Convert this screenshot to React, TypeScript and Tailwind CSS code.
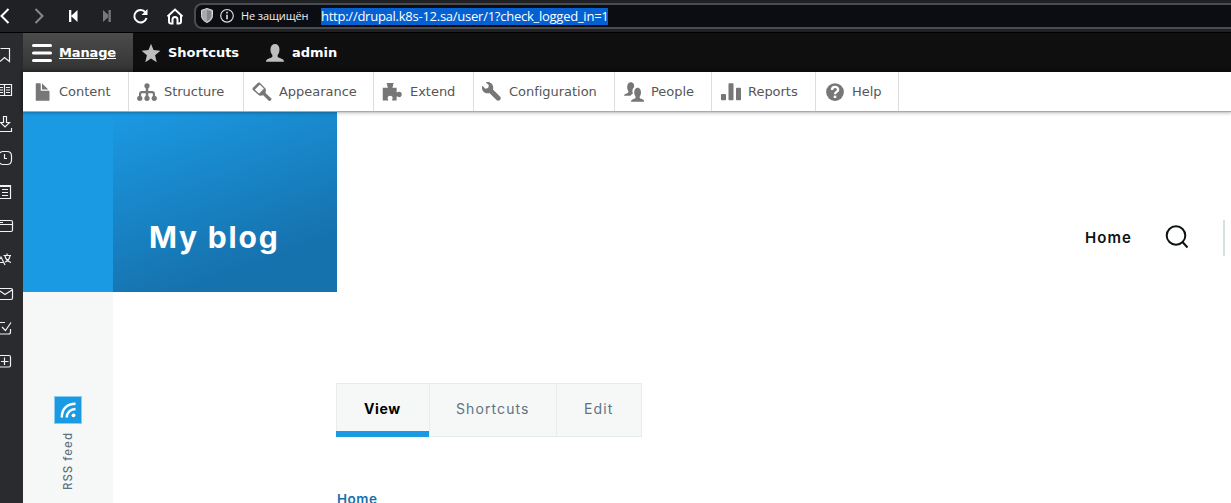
import React from "react";

const FileIcon = (
  <path d="M12.502 7h-5c-.276 0-.502-.225-.502-.5v-5c0-.275-.225-.5-.5-.5h-3c-.276 0-.5.225-.5.5v13.029c0 .275.225.5.5.5h10c.275 0 .5-.225.5-.5v-7.029c.002-.275-.223-.5-.498-.5zM8.502 6h4c.275 0 .34-.159.146-.354l-4.293-4.292c-.195-.195-.353-.129-.353.146v4c-.001.275.224.5.5.5z" />
);
const TreeIcon = (
  <>
    <circle cx="8" cy="3" r="2.100" />
    <path d="M7 4h2v3.100H12.200c1.300 0 2.200.9 2.200 2.200V12h-1.700V9.800c0-.6-.3-.9-.9-.9H9V12H7V8.900H4.200c-.6 0-.9.3-.9.900V12H1.600V9.300c0-1.300.9-2.200 2.200-2.200H7z" />
    <circle cx="2.200" cy="13" r="2.100" />
    <circle cx="8" cy="13" r="2.100" />
    <circle cx="13.800" cy="13" r="2.100" />
  </>
);
const BrushIcon = (
  <>
    <path d="M1 5.900 5.900 1l4.500 4.500-.5 3.900-4 .8z" fill="none" stroke="#777" strokeWidth="1.100" />
    <path d="M.3 5 5 .3l1.600 1.500-4.800 4.800zM5.400 9.600 9.800 5l1.200 1.200-.2 2.500 4.500 4.300c1 1-.8 2.900-1.900 1.900L9 10.500l-2.400.4z" />
  </>
);
const PuzzleIcon = (
  <path d="M.6 4.600h4c.5-.8-.5-1-.5-1.900C4.100 1.700 4.400 1.500 3.700 1.400V.8h5.600v.6c-.700.1-.4.300-.4 1.300 0 .9-.9 1.100-.4 1.900h3.200v3.500c.9.500 1-.3 2.100-.3 2.700 0 2.700 4.300 0 4.300-1.100 0-1.200-.8-2.100-.3V14.800H8.200c-.4-.8.300-1.200.3-2.100 0-2.300-4-2.300-4 0 0 .9.700 1.300.3 2.100H.6z" />
);
const WrenchIcon = (
  <path fillRule="evenodd" d="M14.416 11.586l-.01-.009-5.656-5.656c.15-.449.252-.921.252-1.421 0-2.485-2.016-4.500-4.502-4.500-.505 0-.981.102-1.434.255l2.431 2.431-.588 2.196-2.196.588-2.445-2.445c-.162.464-.268.956-.268 1.475 0 2.486 2.014 4.500 4.500 4.500.5 0 .972-.102 1.421-.251l5.667 5.665c.781.781 2.047.781 2.828 0s.781-2.047 0-2.828z" />
);
const PeopleIcon = (
  <>
    <path d="M0 10.900c.2-1.500 1.300-1.500 2.600-2 1.400-.5 1-1.500.4-2.500-.7-1-.9-6.200 2.400-6.200 2.400 0 2.900 2 2.700 4-1.600 1.100-1.600 3-1 5L5 11z" />
    <path d="M5.500 15.800c0-1.600 1.200-2 2.800-2.500 1.400-.5 1.100-1.500.5-2.500-1-1.400-1-6.200 2.100-6.200s3.100 4.800 2.100 6.200c-.6 1-.9 2 .5 2.500 1.600.5 2.700.9 2.700 2.500z" />
  </>
);
const ChartIcon = (
  <>
    <rect x="0" y="9.600" width="4" height="5" rx=".6" />
    <rect x="6" y="1" width="4" height="13.600" rx=".6" />
    <rect x="12" y="4.500" width="4" height="10.100" rx=".6" />
  </>
);
const HelpIcon = (
  <>
    <circle cx="8" cy="8" r="7.100" />
    <path d="M5.600 6.400c0-3.300 4.900-3.200 4.900-.3 0 1.900-2.500 1.700-2.500 3.700" fill="none" stroke="#fff" strokeWidth="1.900" />
    <rect x="7" y="10.900" width="2" height="1.900" fill="#fff" />
  </>
);
const PersonIcon = (
  <path d="M.8 15c0-2.400 2.400-2.600 4-3.300 1.600-.6 1.400-1.800.5-3C3.800 6.800 3.800.8 8 .8s4.200 6 2.700 7.900c-.9 1.200-1.100 2.400.5 3 1.600.7 4 .9 4 3.300z" />
);

const menu = [
  { label: "Content", icon: FileIcon, w: "w-[106px]", i: "ml-[9px] mr-[7px]" },
  { label: "Structure", icon: TreeIcon, w: "w-[115px]", i: "ml-2 mr-[7px]" },
  { label: "Appearance", icon: BrushIcon, w: "w-[130px]", i: "ml-2 mr-[7px]" },
  { label: "Extend", icon: PuzzleIcon, w: "w-[100px]", i: "ml-2 mr-2" },
  { label: "Configuration", icon: WrenchIcon, w: "w-[141px]", i: "ml-2 mr-[7px]" },
  { label: "People", icon: PeopleIcon, w: "w-[97px]", i: "ml-[9px] mr-[7px]" },
  { label: "Reports", icon: ChartIcon, w: "w-[104px]", i: "ml-[9px] mr-[7px]" },
  { label: "Help", icon: HelpIcon, w: "w-[83px]", i: "ml-[9px] mr-[7px]" },
];

/* Each drawing is centred vertically on y = 17 of a 23x34 cell. */
const panels = [
  <path key="0" d="M0.500 9.500h9v13l-5-4-4.500 4" />,
  <path key="1" d="M0 11.500h4.500v11H0M4.500 11.500h7v11h-7M0 14.500h3M0 17h3M0 19.500h3M6 14.500h4M6 17h4M6 19.500h4" />,
  <path key="2" d="M3.500 9.500h3v6h3L5 20 .500 15.500h3zM0 24.500h11.500V21" />,
  <path key="3" d="M0 12q1-1.500 3-1.500h4q4.500 0 4.500 4.500v4q0 4.500-4.500 4.500H3q-2 0-3-1.500M4.500 13v4.500H7" />,
  <path key="4" d="M0 10.500h10.500v13H0M0 11.500h10M2 14.500h6M2 17.500h6M2 20.500h6" />,
  <path key="5" d="M0 11.500h11q1.500 0 1.500 1.500v8q0 1.500-1.500 1.500H0M0 15.500h12.500M0 13.500h3" />,
  <path key="6" d="M0 16l1-2 4 8M0 19.500h3M3.500 12.500H11M7 10.500v2M5 13c1 4 3 5.500 6 6.500M10 13c-1 4-3 5.500-5 6" />,
  <path key="7" d="M0 11.500h11q1.500 0 1.500 1.500v8q0 1.500-1.500 1.500H0M0 14l5 3.500 7-4.500" />,
  <path key="8" d="M0 11.500h5M10.500 18v3q0 2-2 2H0M2 16l3.500 3.500 5.500-8" />,
  <path key="9" d="M0 10.500h9q1.500 0 1.500 1.500v8.500q0 1.500-1.500 1.500H0M1 16.500h7.500M4.500 12.500V20" />,
];

function BrowserBar() {
  return (
    <div className="flex h-8 shrink-0 items-center bg-[#202124]">
      <svg width="194" height="32" viewBox="0 0 194 32" fill="none" stroke="#fff" strokeWidth="2">
        <path d="M8.500 9 1.500 16l7 7" />
        <path d="m35.500 9 7 7-7 7" stroke="#87888b" />
        <g fill="#fff" stroke="none">
          <path d="M69 10h2.300v12H69zM77.500 10v12L71 16z" />
          <path d="M108.500 10h2.300v12h-2.300zM103 10v12l6.500-6z" fill="#77787b" />
        </g>
        <path d="M145.500 12.500A6.200 6.200 0 1 0 146.500 18" />
        <path d="M147.500 9v6h-6z" fill="#fff" stroke="none" />
        <path d="m167.500 16.500 7.500-7 7.500 7M169 15.500v6q0 2 2 2h1.500v-4q0-2.500 2.500-2.500t2.500 2.500v4h1.500q2 0 2-2v-6" />
      </svg>
      <div className="flex h-[26px] flex-1 items-center rounded-l-lg border-2 border-r-0 border-[#4a4b4f] bg-[#0c0d12]">
        <svg className="ml-1 shrink-0" width="36" height="20" viewBox="0 0 36 20">
          <path d="m7 2.500 5.500 1.800v5.200c0 3.500-2.500 5.800-5.500 7-3-1.200-5.500-3.500-5.500-7V4.300z" fill="#aaa" stroke="#ddd" />
          <path d="M7 4v11c2.500-1 4-3 4-5.500V5.300z" fill="#888" />
          <circle cx="27" cy="9.800" r="6.300" fill="none" stroke="#ddd" strokeWidth="1.200" />
          <path d="M27 8.800V13.300M27 5.800v1.600" stroke="#eee" strokeWidth="1.500" />
        </svg>
        <span className="ml-[5px] w-[80px] whitespace-nowrap font-['Open_Sans','Noto_Sans',sans-serif] text-[11px] leading-4 tracking-[-0.1px] text-[#eee]">Не защищён</span>
        <span className="mt-px h-[17px] w-[287px] whitespace-nowrap bg-[#0560d2] font-['Open_Sans','Noto_Sans',sans-serif] text-[13px] leading-[17px] tracking-[-0.25px] text-white">http://drupal.k8s-12.sa/user/1?check_logged_in=1</span>
      </div>
    </div>
  );
}

function AdminBar() {
  return (
    <div className="flex h-[39px] shrink-0 bg-[#0f0f0f] font-['DejaVu_Sans',sans-serif] text-[13px] font-bold text-white">
      <div className="flex w-[110px] items-center bg-gradient-to-b from-[#4c4c4c] to-[#333]">
        <svg className="ml-[9px]" width="20" height="20" viewBox="0 0 20 20" stroke="#fff" strokeWidth="3" strokeLinecap="round">
          <path d="M1.500 2.500h17M1.500 10h17M1.500 17.500h17" />
        </svg>
        <span className="ml-[7px] tracking-[-0.15px] underline">Manage</span>
      </div>
      <div className="flex w-[124px] items-center">
        <svg className="ml-2" width="20" height="20" viewBox="0 0 20 20" fill="#bebebe">
          <path d="m10 .8 2.500 6.300 6.900.6-5.300 4.500 1.600 7L10 15.500l-5.700 3.700 1.600-7L.6 7.700l6.900-.6z" />
        </svg>
        <span className="ml-[7px]">Shortcuts</span>
      </div>
      <div className="flex items-center">
        <svg className="ml-2" width="20" height="20" viewBox="0 0 16 16" fill="#bebebe">{PersonIcon}</svg>
        <span className="ml-[7px] tracking-[-0.05px]">admin</span>
      </div>
    </div>
  );
}

function AdminTray() {
  return (
    <div className="relative z-10 flex h-[39px] shrink-0 bg-white font-['DejaVu_Sans',sans-serif] text-[13px] text-[#565656] shadow-[0_1px_0_#aaa,0_0_4px_1px_rgba(0,0,0,.45)]">
      {menu.map((m) => (
        <div key={m.label} className={`flex shrink-0 items-center border-r border-[#ddd] ${m.w}`}>
          <svg className={`shrink-0 ${m.i}`} width="20" height="20" viewBox="0 0 16 16" fill="#777">{m.icon}</svg>
          <span className="whitespace-nowrap tracking-[-0.03px]">{m.label}</span>
        </div>
      ))}
    </div>
  );
}

function Site() {
  return (
    <div className="flex min-h-0 flex-1 bg-white font-['Inter',sans-serif]">
      <aside className="flex w-[90px] shrink-0 flex-col bg-[#f6f8f8]">
        <div className="h-[181px] shrink-0 bg-[#1b9ae4]" />
        <div className="mt-[104px] flex flex-col items-center">
          <svg width="28" height="28" viewBox="0 0 28 28" fill="none" stroke="#fff" strokeWidth="2.500">
            <rect x=".5" y=".5" width="27" height="27" fill="#1b9ae4" stroke="#8accf2" strokeWidth="1" />
            <path d="M7.800 21.500C7.800 13 13 7.800 21.500 7.800M12.800 21.500c0-5 3.700-8.500 8.700-8.500" />
            <circle cx="19.500" cy="19.300" r="1.900" fill="#fff" stroke="none" />
          </svg>
          <span className="mt-[8px] rotate-180 whitespace-nowrap text-[11.5px] font-medium leading-4 tracking-[1px] text-[#5f7380] [writing-mode:vertical-rl]">RSS feed</span>
        </div>
      </aside>
      <div className="flex min-w-0 flex-1 flex-col">
        <header className="flex h-[181px] shrink-0">
          <div className="w-[224px] shrink-0 bg-[linear-gradient(160deg,#1b9ae4_0%,#1672ad_78%)] pl-9 pt-[106px]">
            <h1 className="whitespace-nowrap text-[30px] font-bold leading-10 tracking-[1.8px] text-white">My blog</h1>
          </div>
          <nav className="mt-[109px] flex h-9 flex-1 items-center justify-end text-[#0d1214]">
            <a className="w-[80px] text-[15px] font-semibold tracking-[1.1px]">Home</a>
            <svg className="-mt-0.5 mr-[34px]" width="24" height="24" viewBox="0 0 24 24" fill="none" stroke="#0d1214" strokeWidth="2">
              <circle cx="11" cy="10.500" r="9.300" />
              <path d="m17.500 17 5 5.500" />
            </svg>
            <div className="h-9 w-0.5 bg-[#d7dfe3]" />
            <div className="w-1.5" />
          </nav>
        </header>
        <main className="pl-[223px] pt-[91px]">
          <div className="flex h-[54px] w-[306px] border border-[#e7ecee] bg-[#f6f8f8] text-[14px] leading-[50px] tracking-[1.1px] text-[#5f7380]">
            <div className="-mb-px -ml-px w-[93px] border-b-[6px] border-[#1b9ae4] pl-7 font-bold tracking-[0.6px] text-black">View</div>
            <div className="w-[128px] border-x border-[#e7ecee] pl-[26px]">Shortcuts</div>
            <div className="pl-[27px]">Edit</div>
          </div>
          <a className="mt-[52px] block pl-px text-[13.5px] font-semibold leading-5 tracking-[0.5px] text-[#1670ab]">Home</a>
        </main>
      </div>
    </div>
  );
}

export default function App() {
  return (
    <div className="flex h-[503px] w-[1231px] flex-col overflow-hidden bg-white">
      <BrowserBar />
      <div className="flex min-h-0 flex-1 border-t border-black">
        <div className="flex w-[23px] shrink-0 flex-col bg-[#2a2b2f] pt-[6px]">
          {panels.map((p, i) => (
            <svg key={i} className="shrink-0" width="23" height="34" viewBox="0 0 23 34" fill="none" stroke="#f2f2f2" strokeWidth="1.200">{p}</svg>
          ))}
        </div>
        <div className="flex min-w-0 flex-1 flex-col">
          <AdminBar />
          <AdminTray />
          <Site />
        </div>
      </div>
    </div>
  );
}
